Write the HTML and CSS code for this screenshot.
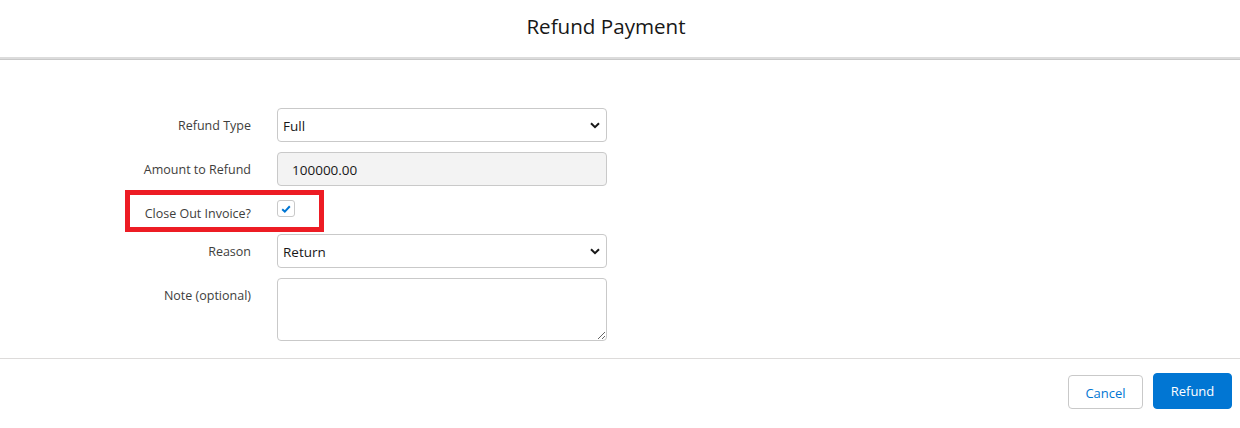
FILE: index.html
```html
<!DOCTYPE html>
<html>
<head>
<meta charset="utf-8">
<link rel="stylesheet" href="styles.css">
</head>
<body>
<div class="modal">
  <header class="header">
    <h1 class="title">Refund Payment</h1>
  </header>
  <main class="body">
    <div class="form">
      <div class="label">Refund Type</div>
      <div class="select"><span>Full</span><svg class="chev" width="10" height="7" viewBox="0 0 10 7"><path d="M1 1.2 L5 5.2 L9 1.2" fill="none" stroke="#181818" stroke-width="2"/></svg></div>

      <div class="label">Amount to Refund</div>
      <div class="input disabled">100000.00</div>

      <div class="label check-label">Close Out Invoice?</div>
      <div class="check-cell">
        <span class="checkbox"><svg width="10" height="8" viewBox="0 0 10 8"><path d="M1.2 4.3 L3.8 6.6 L8.8 1.2" fill="none" stroke="#0176d3" stroke-width="2"/></svg></span>
        <div class="highlight"></div>
      </div>

      <div class="label">Reason</div>
      <div class="select"><span>Return</span><svg class="chev" width="10" height="7" viewBox="0 0 10 7"><path d="M1 1.2 L5 5.2 L9 1.2" fill="none" stroke="#181818" stroke-width="2"/></svg></div>

      <div class="label">Note (optional)</div>
      <textarea class="textarea"></textarea>
    </div>
  </main>
  <footer class="footer">
    <button class="btn btn-neutral">Cancel</button>
    <button class="btn btn-brand">Refund</button>
  </footer>
</div>
</body>
</html>
```
FILE: styles.css
```css
* { box-sizing: border-box; }
html, body { margin: 0; padding: 0; background: #fff; }
body {
  font-family: "Open Sans", "Noto Sans", Arial, sans-serif;
  color: #181818;
  width: 1240px;
  height: 428px;
  overflow: hidden;
}
.header {
  height: 59px;
  border-bottom: 2px solid #dcdcdc;
  box-shadow: 0 1px 0 #c9c9c9;
  display: flex;
  justify-content: center;
  padding: 12px 28px 0 0;
}
.title {
  margin: 0;
  font-weight: 400;
  font-size: 20.6px;
  line-height: 28px;
  color: #181818;
}
.body {
  height: 299px;
  padding-top: 49px;
}
.form {
  display: grid;
  grid-template-columns: 251px 330px;
  column-gap: 26px;
  row-gap: 10px;
}
.label {
  text-align: right;
  font-size: 12.5px;
  line-height: 18px;
  padding-top: 9px;
  color: #3e3e3c;
  position: relative;
}
.select, .input {
  height: 34px;
  border: 1px solid #c9c9c9;
  border-radius: 4px;
  display: flex;
  align-items: center;
  font-size: 13.5px;
  color: #181818;
  padding-top: 1px;
}
.select {
  justify-content: space-between;
  padding-left: 5px;
  padding-right: 5px;
  background: #fff;
}
.chev { margin-right: 1px; }
.input.disabled {
  background: #f3f3f3;
  padding-left: 14px;
}
.check-cell {
  height: 28px;
  position: relative;
  padding-top: 4px;
}
.checkbox {
  display: flex;
  align-items: center;
  justify-content: center;
  width: 18px;
  height: 17px;
  border: 1px solid #c9c9c9;
  border-radius: 3px;
  background: #fff;
}
.highlight {
  position: absolute;
  left: -152px;
  top: -6px;
  width: 199px;
  height: 42px;
  border: 5px solid #ed1c24;
  pointer-events: none;
}
.textarea {
  height: 63px;
  border: 1px solid #c9c9c9;
  border-radius: 4px;
  resize: vertical;
  font-family: inherit;
  margin: 0;
  display: block;
  width: 330px;
}
.footer {
  border-top: 1px solid #dddbda;
  display: flex;
  justify-content: flex-end;
  align-items: flex-start;
  gap: 10px;
  padding: 14px 8px 0 0;
  height: 70px;
}
.btn {
  font-family: inherit;
  font-size: 13px;
  border-radius: 4px;
  height: 35px;
  cursor: pointer;
}
.btn-neutral {
  margin-top: 2px;
  height: 34px;
  width: 75px;
  background: #fff;
  border: 1px solid #c9c9c9;
  color: #0176d3;
  padding-top: 3px;
}
.btn-brand {
  width: 79px;
  height: 36px;
  background: #0176d3;
  border: 1px solid #0176d3;
  color: #fff;
}
```
